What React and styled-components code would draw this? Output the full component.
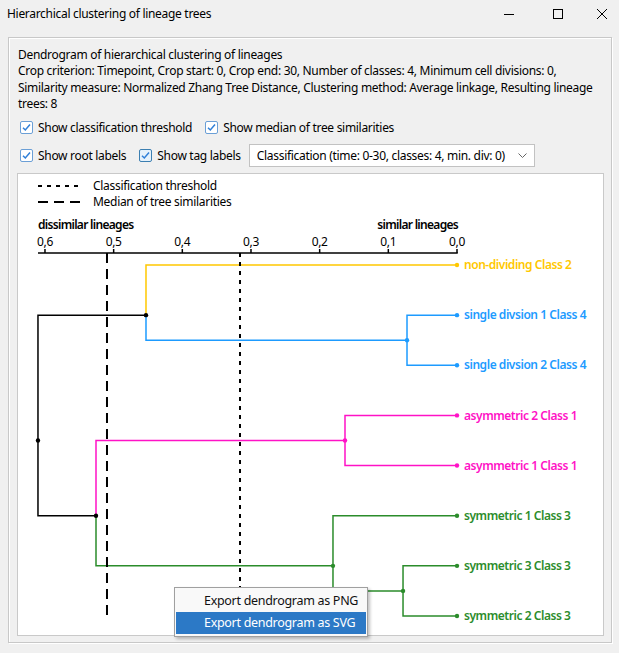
import React from 'react';
import styled, { createGlobalStyle, css } from 'styled-components';

const GlobalStyle = createGlobalStyle`
    html, body {
        margin: 0;
        padding: 0;
        background: #f0f0f0;
    }

    body {
        font-family: "Noto Sans", "Segoe UI", sans-serif;
        font-size: 12px;
        letter-spacing: -0.3px;
        color: #000;
    }
`;

const Window = styled.div`
    position: relative;
    width: 619px;
    height: 653px;
    display: flex;
    flex-direction: column;
    background: #f0f0f0;
    overflow: hidden;
`;

const TitleBar = styled.header`
    height: 30px;
    flex-shrink: 0;
    display: flex;
    align-items: center;
    padding-left: 7px;
`;

const Title = styled.span`
    flex: 1;
    margin-top: -4px;
`;

const Controls = styled.div`
    display: flex;
    align-items: center;
    height: 100%;
    padding-right: 12px;
    gap: 39px;
    margin-top: -3px;

    & > svg:last-child {
        margin-left: -5px;
    }
`;

const Group = styled.section`
    flex: 1;
    display: flex;
    flex-direction: column;
    margin: 7px 7px 10px 8px;
    padding: 9px 7px 6px 8px;
    border: 1px solid #c8c8c8;
    box-shadow: inset 1px 1px 0 #fff, 1px 1px 0 #fff;
    min-height: 0;
`;

const Description = styled.p`
    margin: 0 0 0 1px;
    line-height: 16.4px;
`;

const OptionsRow = styled.div`
    display: flex;
    align-items: center;
    gap: 13px;
    height: ${({ tall }) => (tall ? '23px' : '22px')};
    padding-left: 3px;
    margin-top: ${({ tall }) => (tall ? '5px' : '4px')};
`;

const CheckLabel = styled.label`
    display: flex;
    align-items: center;
    gap: 5px;
    white-space: nowrap;
`;

const Box = styled.span`
    width: 13px;
    height: 13px;
    box-sizing: border-box;
    border: 1px solid #6b9fd6;
    border-radius: 2px;
    background: #fff;
    display: flex;
    align-items: center;
    justify-content: center;

    ${({ hover }) => hover && css`
        border-color: #3c7fb1;
        background: #e5f1fb;
    `}
`;

const Combo = styled.div`
    margin-left: -5px;
    width: 286px;
    height: 23px;
    box-sizing: border-box;
    border: 1px solid #c2c2c2;
    background: #fff;
    display: flex;
    align-items: center;
    justify-content: space-between;
    padding: 0 7px 0 7px;
    white-space: nowrap;
`;

const Panel = styled.div`
    flex: 1;
    margin-top: 6px;
    background: #fff;
    border: 1px solid #c9c9c9;
    min-height: 0;

    svg {
        display: block;
    }
`;

const Menu = styled.ul`
    position: absolute;
    left: 174px;
    top: 587px;
    width: 194px;
    box-sizing: border-box;
    margin: 0;
    padding: 2px 1px;
    list-style: none;
    background: #f9f9f9;
    border: 1px solid #a0a0a0;
    box-shadow: 2px 2px 3px rgba(0, 0, 0, .25);
`;

const MenuItem = styled.li`
    height: 22px;
    line-height: 22px;
    padding-left: 28px;
    font-size: 12.5px;
    color: #111;

    ${({ active }) => active && css`
        background: #2c79c6;
        color: #fff;
    `}
`;

const Checkbox = ({ hover, children }) => (
    <CheckLabel>
        <Box hover={hover}>
            <svg width="11" height="11" viewBox="0 0 11 11">
                <path d="M2 5.8 L4.3 8 L9 2.6" fill="none" stroke="#2f7fd8" strokeWidth="1.5" />
            </svg>
        </Box>
        {children}
    </CheckLabel>
);

// chart geometry, in panel coordinates
const ZERO_X = 439;
const UNIT = 686.7;
const AXIS_Y = 79;
const FIRST_LEAF_Y = 91;
const LEAF_STEP = 50.14;
const xOf = d => ZERO_X - d * UNIT;

const classColors = {
    1: '#ff12c6',
    2: '#ffc800',
    3: '#2b8c2b',
    4: '#1d9bff',
};

const leaves = [
    { name: 'non-dividing', cls: 2 },
    { name: 'single divsion 1', cls: 4 },
    { name: 'single divsion 2', cls: 4 },
    { name: 'asymmetric 2', cls: 1 },
    { name: 'asymmetric 1', cls: 1 },
    { name: 'symmetric 1', cls: 3 },
    { name: 'symmetric 3', cls: 3 },
    { name: 'symmetric 2', cls: 3 },
];

const tree = {
    d: 0.6102, children: [
        { d: 0.4529, children: [0, { d: 0.0728, children: [1, 2] }] },
        {
            d: 0.5257, children: [
                { d: 0.1631, children: [3, 4] },
                { d: 0.1806, children: [5, { d: 0.0786, children: [6, 7] }] },
            ]
        },
    ]
};

const layout = (node, segments, dots) => {
    if (typeof node === 'number') {
        const y = FIRST_LEAF_Y + node * LEAF_STEP;
        return { x: ZERO_X, y, ys: [y], classes: [leaves[node].cls], color: classColors[leaves[node].cls] };
    }
    const kids = node.children.map(child => layout(child, segments, dots));
    const ys = kids.flatMap(k => k.ys);
    const classes = kids.flatMap(k => k.classes);
    const x = xOf(node.d);
    const y = ys.reduce((a, b) => a + b, 0) / ys.length;
    const color = classes.every(c => c === classes[0]) ? classColors[classes[0]] : '#000';
    kids.forEach(k => segments.push({ d: `M${x} ${y} V${k.y} H${k.x}`, color: k.color }));
    dots.push({ x, y, color });
    return { x, y, ys, classes, color };
};

const Dendrogram = () => {
    const segments = [];
    const dots = [];
    layout(tree, segments, dots);
    const ticks = [0.6, 0.5, 0.4, 0.3, 0.2, 0.1, 0];
    const median = 0.5097;
    const threshold = 0.316;

    return (
        <svg width="585" height="461" fontFamily='"Noto Sans", sans-serif' fontSize="12">
            <line x1="20" x2="62" y1="12" y2="12" stroke="#000" strokeWidth="2" strokeDasharray="4 5" />
            <text x="75" y="16">Classification threshold</text>
            <line x1="20" x2="62" y1="28" y2="28" stroke="#000" strokeWidth="2" strokeDasharray="10 6" />
            <text x="75" y="32">Median of tree similarities</text>

            <text x="20" y="55" fontWeight="600" letterSpacing="-0.7">dissimilar lineages</text>
            <text x="440" y="55" fontWeight="600" letterSpacing="-0.7" textAnchor="end">similar lineages</text>
            {ticks.map(t => (
                <g key={t}>
                    <text x={xOf(t)} y="72" textAnchor="middle">{t.toFixed(1).replace('.', ',')}</text>
                    <line x1={xOf(t)} x2={xOf(t)} y1={AXIS_Y - 4} y2={AXIS_Y} stroke="#000" strokeWidth="1.5" />
                </g>
            ))}
            <line x1="20" x2={ZERO_X + 0.75} y1={AXIS_Y} y2={AXIS_Y} stroke="#000" strokeWidth="1.5" />

            {segments.map((s, i) => (
                <path key={i} d={s.d} fill="none" stroke={s.color} strokeWidth="1.5" />
            ))}
            {dots.map((p, i) => (
                <circle key={i} cx={p.x} cy={p.y} r="2.2" fill={p.color} />
            ))}
            {leaves.map((leaf, i) => {
                const y = FIRST_LEAF_Y + i * LEAF_STEP;
                const color = classColors[leaf.cls];
                return (
                    <g key={leaf.name}>
                        <circle cx={ZERO_X} cy={y} r="2.2" fill={color} />
                        <text x="446" y={y} dy="0.35em" fill={color} fontWeight="600" letterSpacing="-0.45">
                            {leaf.name} Class {leaf.cls}
                        </text>
                    </g>
                );
            })}

            <line x1={xOf(median)} x2={xOf(median)} y1={AXIS_Y} y2="443" stroke="#000" strokeWidth="2" strokeDasharray="10 6" />
            <line x1={xOf(threshold)} x2={xOf(threshold)} y1={AXIS_Y} y2="443" stroke="#000" strokeWidth="2" strokeDasharray="4 5" />
        </svg>
    );
};

const App = () => (
    <Window>
        <GlobalStyle />
        <TitleBar>
            <Title>Hierarchical clustering of lineage trees</Title>
            <Controls>
                <svg width="10" height="10" viewBox="0 0 10 10">
                    <line x1="0" x2="10" y1="5.5" y2="5.5" stroke="#000" strokeWidth="1" />
                </svg>
                <svg width="10" height="10" viewBox="0 0 10 10">
                    <rect x="0.5" y="0.5" width="9" height="9" fill="none" stroke="#000" strokeWidth="1" />
                </svg>
                <svg width="10" height="10" viewBox="0 0 10 10">
                    <path d="M0 0 L10 10 M10 0 L0 10" stroke="#000" strokeWidth="1" />
                </svg>
            </Controls>
        </TitleBar>
        <Group>
            <Description>
                Dendrogram of hierarchical clustering of lineages<br />
                Crop criterion: Timepoint, Crop start: 0, Crop end: 30, Number of classes: 4, Minimum cell divisions: 0,
                Similarity measure: Normalized Zhang Tree Distance, Clustering method: Average linkage, Resulting lineage
                trees: 8
            </Description>
            <OptionsRow>
                <Checkbox>Show classification threshold</Checkbox>
                <Checkbox>Show median of tree similarities</Checkbox>
            </OptionsRow>
            <OptionsRow tall>
                <Checkbox>Show root labels</Checkbox>
                <Checkbox hover>Show tag labels</Checkbox>
                <Combo>
                    <span>Classification (time: 0-30, classes: 4, min. div: 0)</span>
                    <svg width="9" height="5" viewBox="0 0 9 5">
                        <path d="M0.5 0.5 L4.5 4.5 L8.5 0.5" fill="none" stroke="#666" strokeWidth="1" />
                    </svg>
                </Combo>
            </OptionsRow>
            <Panel>
                <Dendrogram />
            </Panel>
        </Group>
        <Menu>
            <MenuItem>Export dendrogram as PNG</MenuItem>
            <MenuItem active>Export dendrogram as SVG</MenuItem>
        </Menu>
    </Window>
);

export default App;
